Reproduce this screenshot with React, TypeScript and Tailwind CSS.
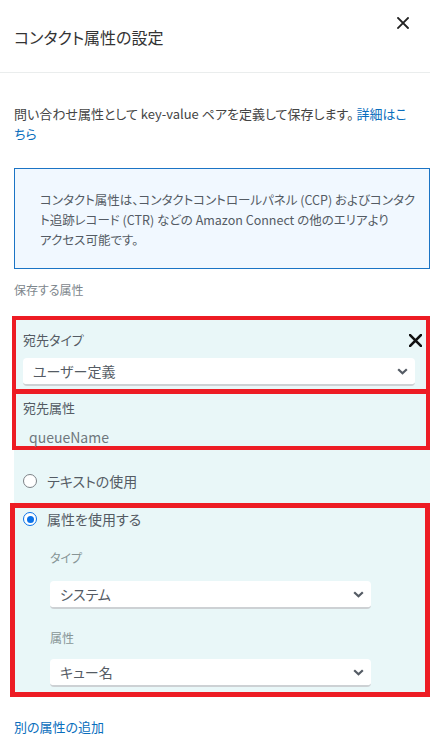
import React from "react";

const font = "font-['Noto_Sans_CJK_JP','Noto_Sans',sans-serif] [font-feature-settings:'palt']";

const Chevron = () => (
  <svg width="11" height="7" viewBox="0 0 11 7" className="shrink-0">
    <polyline points="1.2,1.2 5.5,5.3 9.8,1.2" fill="none" stroke="#545b64" strokeWidth="2.2" />
  </svg>
);

const Select = ({ value, className = "" }: { value: string; className?: string }) => (
  <div
    className={`flex h-[28px] items-center justify-between rounded-[4px] border-b-2 border-[#cdd1d4] bg-white pl-[10px] pr-[7px] text-[14px] text-[#545b64] ${className}`}
  >
    <span>{value}</span>
    <Chevron />
  </div>
);

const Radio = ({ checked, label }: { checked?: boolean; label: string }) => (
  <label className="flex h-[20px] items-center gap-[10px] text-[14px] text-[#545b64]">
    {checked ? (
      <span className="flex h-[14px] w-[14px] items-center justify-center rounded-full border-[1.5px] border-[#0a72e8] bg-white">
        <span className="h-[7px] w-[7px] rounded-full bg-[#0a72e8]" />
      </span>
    ) : (
      <span className="h-[14px] w-[14px] rounded-full border-[1.5px] border-[#7d8287] bg-white" />
    )}
    {label}
  </label>
);

const CloseIcon = ({ size, stroke, color }: { size: number; stroke: number; color: string }) => (
  <svg width={size} height={size} viewBox="0 0 12 12">
    <path d="M1 1L11 11M11 1L1 11" stroke={color} strokeWidth={stroke} strokeLinecap="square" />
  </svg>
);

export default function App() {
  return (
    <div className={`w-[430px] bg-white ${font}`}>
      <div className="flex h-[73px] items-start justify-between border-b border-[#eaeded] pl-[14px] pr-[21px]">
        <h1 className="pt-[25px] text-[16px] leading-[24px] text-[#333]">コンタクト属性の設定</h1>
        <button className="mt-[17px]">
          <CloseIcon size={12} stroke={1.8} color="#222" />
        </button>
      </div>

      <div className="pl-[14px]">
        <p className="mt-[31px] max-w-[402px] text-[13px] leading-[20px] text-[#444]">
          問い合わせ属性として key-value ペアを定義して保存します。{" "}
          <a className="text-[#0a6ebd]">詳細はこちら</a>
        </p>

        <div className="mt-[24px] border border-[#1b74c5] bg-[#f1f8ff] pb-[18px] pl-[25px] pr-[8px] pt-[21px] text-[12.5px] leading-[20px] text-[#545b64]">
          コンタクト属性は、コンタクトコントロールパネル (CCP) およびコンタクト追跡レコード (CTR) などの Amazon Connect の他のエリアより
          <br />
          アクセス可能です。
        </div>

        <p className="mt-[12px] text-[12px] leading-[18px] text-[#7d868c]">保存する属性</p>

        <div className="mt-[17px] bg-[#e9f7f8]">
          <div className="-ml-[2px] border-4 border-[#ed1c24] pb-[3px] pl-[7px] pr-[11px] pt-[11px]">
            <div className="flex h-[18px] items-center justify-between">
              <span className="text-[13px] text-[#545b64]">宛先タイプ</span>
              <span className="-mr-[7px]">
                <CloseIcon size={13} stroke={2.4} color="#111" />
              </span>
            </div>
            <Select value="ユーザー定義" className="mt-[9px]" />
          </div>

          <div className="-ml-[2px] -mt-[3px] border-4 border-[#ed1c24] pl-[7px] pt-[5px]">
            <p className="text-[13px] leading-[18px] text-[#545b64]">宛先属性</p>
            <p className="mt-[11px] pl-[6px] text-[14px] leading-[18px] text-[#6f777d]">queueName</p>
          </div>

          <div className="pb-[12px] pl-[9px] pt-[21px]">
            <Radio label="テキストの使用" />
          </div>

          <div className="-ml-[4px] border-[5px] border-[#ed1c24] pb-[5px] pl-[8px] pt-[1px]">
            <Radio checked label="属性を使用する" />
            <div className="pl-[27px] pr-[54px]">
              <p className="mt-[21px] text-[12px] leading-[16px] text-[#879596]">タイプ</p>
              <Select value="システム" className="mt-[15px]" />
              <p className="mt-[21px] text-[12px] leading-[16px] text-[#879596]">属性</p>
              <Select value="キュー名" className="mt-[13px]" />
            </div>
          </div>
        </div>

        <a className="mt-[21px] block pb-[20px] text-[13px] leading-[18px] text-[#0a6ebd]">別の属性の追加</a>
      </div>
    </div>
  );
}
